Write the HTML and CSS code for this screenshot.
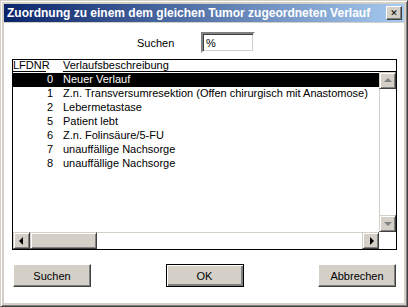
FILE: index.html
```html
<!DOCTYPE html>
<html lang="de">
<head>
  <meta charset="UTF-8" />
  <meta name="viewport" content="width=device-width, initial-scale=1.0" />
  <title>Zuordnung</title>
  <link rel="stylesheet" href="styles.css">
</head>
<body>
  <div class="window">
    <div class="titlebar">
      <span class="title">Zuordnung zu einem dem gleichen Tumor zugeordneten Verlauf</span>
      <span class="close">✕</span>
    </div>

    <div class="client">
      <div class="search">
        <span class="label">Suchen</span>
        <span class="field">%</span>
      </div>

      <div class="list">
        <div class="head">
          <span class="h-nr">LFDNR</span>
          <span class="h-text">Verlaufsbeschreibung</span>
        </div>
        <div class="body">
          <div class="rows">
            <div class="row selected"><span class="nr">0</span><span>Neuer Verlauf</span></div>
            <div class="row"><span class="nr">1</span><span>Z.n. Transversumresektion (Offen chirurgisch mit Anastomose)</span></div>
            <div class="row"><span class="nr">2</span><span>Lebermetastase</span></div>
            <div class="row"><span class="nr">5</span><span>Patient lebt</span></div>
            <div class="row"><span class="nr">6</span><span>Z.n. Folinsäure/5-FU</span></div>
            <div class="row"><span class="nr">7</span><span>unauffällige Nachsorge</span></div>
            <div class="row"><span class="nr">8</span><span>unauffällige Nachsorge</span></div>
          </div>
          <div class="vscroll">
            <span class="sbtn up"></span>
            <span class="vtrack"></span>
            <span class="sbtn down"></span>
          </div>
        </div>
        <div class="hbar">
          <div class="hscroll">
            <span class="sbtn left"></span>
            <span class="thumb"></span>
            <span class="htrack"></span>
            <span class="sbtn right"></span>
          </div>
          <span class="corner"></span>
        </div>
      </div>

      <div class="buttons">
        <button>Suchen</button>
        <button class="default">OK</button>
        <button>Abbrechen</button>
      </div>
    </div>
  </div>
</body>
</html>
```

FILE: styles.css
```css
* { box-sizing: border-box; }
body {
  margin: 0;
  font-family: "Liberation Sans", Arial, sans-serif;
  font-size: 11px;
  color: #000;
}
.window {
  width: 408px;
  height: 307px;
  background: #d4d0c8;
  border: 1px solid;
  border-color: #d4d0c8 #404040 #404040 #d4d0c8;
  box-shadow: inset 1px 1px #fff, inset -1px -1px #808080;
  padding: 3px;
  display: flex;
  flex-direction: column;
}
.titlebar {
  height: 18px;
  background: linear-gradient(to right, #0a246a, #a6caf0);
  display: flex;
  align-items: center;
  justify-content: space-between;
  padding: 0 2px 0 3px;
}
.title {
  color: #fff;
  font-weight: bold;
  font-size: 12px;
  white-space: nowrap;
}
.close {
  width: 16px;
  height: 14px;
  background: #d4d0c8;
  border: 1px solid;
  border-color: #fff #404040 #404040 #fff;
  box-shadow: inset -1px -1px #808080;
  font-size: 9px;
  font-weight: bold;
  line-height: 12px;
  text-align: center;
  font-family: "DejaVu Sans", sans-serif;
}
.client {
  flex: 1;
  margin-top: 1px;
  background: #fff;
  display: flex;
  flex-direction: column;
}
.search {
  display: flex;
  align-items: center;
  margin-top: 9px;
  padding-left: 133px;
}
.label {
  width: 64px;
}
.field {
  width: 54px;
  height: 21px;
  border: 2px solid;
  border-color: #808080 #fff #fff #808080;
  box-shadow: inset 1px 1px #404040, inset -1px -1px #d4d0c8;
  padding: 3px 0 0 3px;
}
.list {
  margin: 6px 7px 0 8px;
  height: 191px;
  border: 1px solid #000;
  display: flex;
  flex-direction: column;
}
.head {
  height: 12px;
  display: flex;
  line-height: 11px;
}
.h-nr {
  width: 33px;
  border-bottom: 1px solid #000;
}
.h-text {
  flex: 1;
  margin-left: 17px;
  border-bottom: 1px solid #000;
}
.body {
  flex: 1;
  display: flex;
}
.rows {
  flex: 1;
  padding-top: 1px;
}
.row {
  height: 14px;
  line-height: 13px;
  display: flex;
  white-space: nowrap;
}
.row.selected {
  background: #000;
  color: #fff;
}
.nr {
  width: 40px;
  text-align: right;
  margin-right: 10px;
}
.vscroll {
  width: 17px;
  display: flex;
  flex-direction: column;
}
.vtrack {
  flex: 1;
  border-left: 1px solid #d4d0c8;
}
.sbtn {
  width: 17px;
  height: 17px;
  background: #d4d0c8;
  border: 1px solid;
  border-color: #d4d0c8 #404040 #404040 #d4d0c8;
  box-shadow: inset 1px 1px #fff, inset -1px -1px #808080;
  position: relative;
  flex: none;
}
.sbtn::after {
  content: "";
  position: absolute;
  left: 50%;
  top: 50%;
  border: 4px solid transparent;
}
.up::after {
  border-bottom-color: #808080;
  border-top-width: 0;
  margin: -3px 0 0 -4px;
}
.down::after {
  border-top-color: #808080;
  border-bottom-width: 0;
  margin: -2px 0 0 -4px;
}
.left::after {
  border-right-color: #000;
  border-left-width: 0;
  margin: -4px 0 0 -3px;
}
.right::after {
  border-left-color: #000;
  border-right-width: 0;
  margin: -4px 0 0 -1px;
}
.hbar {
  height: 17px;
  display: flex;
}
.hscroll {
  flex: 1;
  display: flex;
}
.thumb {
  width: 67px;
  background: #d4d0c8;
  border: 1px solid;
  border-color: #d4d0c8 #404040 #404040 #d4d0c8;
  box-shadow: inset 1px 1px #fff, inset -1px -1px #808080;
}
.htrack {
  flex: 1;
  border-top: 1px solid #d4d0c8;
}
.corner {
  width: 17px;
}
.buttons {
  display: flex;
  justify-content: space-between;
  margin-top: 14px;
  padding: 0 8px 0 9px;
}
button {
  width: 78px;
  height: 23px;
  font-family: "Liberation Sans", Arial, sans-serif;
  font-size: 11px;
  color: #000;
  background: #d4d0c8;
  border: 1px solid;
  border-color: #fff #404040 #404040 #fff;
  box-shadow: inset -1px -1px #808080;
  padding: 0;
}
button.default {
  border-color: #000;
  box-shadow: inset 1px 1px #fff, inset -2px -2px #808080;
}
```
